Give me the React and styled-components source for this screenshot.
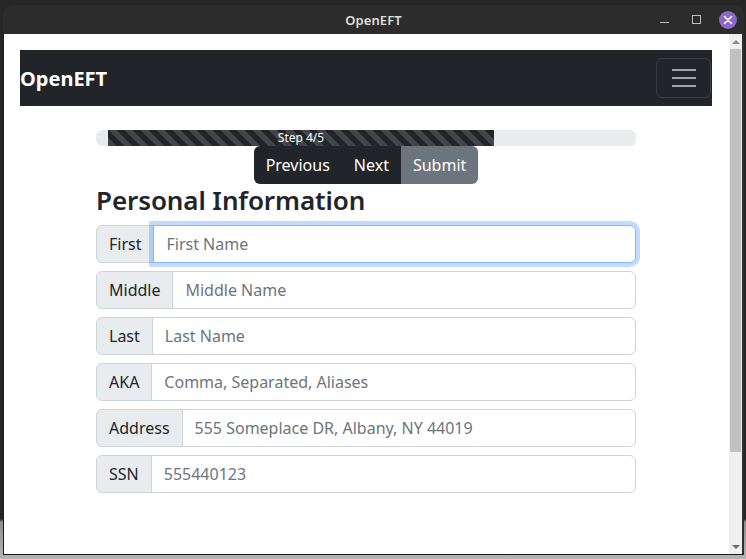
import React from "react";
import styled, { createGlobalStyle } from "styled-components";

const GlobalStyle = createGlobalStyle`
	html, body {
		margin: 0;
		padding: 0;
	}
	body {
		font-family: "Noto Sans", "DejaVu Sans", sans-serif;
		color: #212529;
	}
	* {
		box-sizing: border-box;
	}
`;

const Desktop = styled.div`
	width: 746px;
	height: 559px;
	overflow: hidden;
	padding: 5px 0 0 3px;
	background: linear-gradient(
		to bottom,
		#262626 0,
		#262626 519px,
		#8e8e8e 522px,
		#b4b4b4 559px
	);
`;

const Window = styled.div`
	width: 741px;
	display: flex;
	flex-direction: column;
`;

const TitleBar = styled.div`
	height: 29px;
	background: #2c2c2c;
	border-radius: 10px 10px 0 0;
	display: grid;
	grid-template-columns: 1fr auto 1fr;
	align-items: center;
`;

const Title = styled.div`
	grid-column: 2;
	color: #dedede;
	font-size: 13px;
	font-weight: 600;
	letter-spacing: 0.1px;
`;

const Controls = styled.div`
	grid-column: 3;
	justify-self: end;
	display: flex;
	align-items: center;
	gap: 14px;
	padding-right: 7px;
`;

const Control = styled.div`
	width: 18px;
	height: 18px;
	display: flex;
	align-items: center;
	justify-content: center;
	border-radius: 50%;
	background: ${(p) => (p.$close ? "#8a68c6" : "transparent")};
`;

const MinLine = styled.div`
	width: 9px;
	height: 1px;
	margin-top: 5px;
	background: #bdbdbd;
`;

const MaxBox = styled.div`
	width: 9px;
	height: 9px;
	border: 1px solid #bdbdbd;
`;

const Body = styled.div`
	height: 521px;
	display: flex;
	background: #fff;
	border-left: 1px solid #1b1b1b;
	border-right: 2px solid #2f2f2f;
	border-bottom: 1px solid #1b1b1b;
`;

const Page = styled.div`
	flex: 1;
	padding: 16px 17px 0 16px;
	overflow: hidden;
`;

const Scrollbar = styled.div`
	width: 13px;
	background: #efefef;
	display: flex;
	flex-direction: column;
	align-items: center;
`;

const Arrow = styled.div`
	height: 15px;
	width: 100%;
	display: flex;
	align-items: center;
	justify-content: center;
	&::after {
		content: "";
		border-left: 4px solid transparent;
		border-right: 4px solid transparent;
		${(p) =>
			p.$down
				? "border-top: 4px solid #6a6a6a;"
				: "border-bottom: 4px solid #8a8a8a;"}
	}
`;

const Thumb = styled.div`
	width: 11px;
	height: 403px;
	background: #c1c1c1;
`;

const Track = styled.div`
	flex: 1;
`;

const Navbar = styled.nav`
	height: 56px;
	background: #212529;
	display: flex;
	align-items: center;
	justify-content: space-between;
	padding-right: 1px;
`;

const Brand = styled.div`
	color: #fff;
	font-size: 20px;
	font-weight: 700;
`;

const Toggler = styled.button`
	width: 55px;
	height: 40px;
	background: transparent;
	border: 1px solid rgba(255, 255, 255, 0.1);
	border-radius: 6px;
	display: flex;
	flex-direction: column;
	align-items: center;
	justify-content: center;
	gap: 6px;
	padding: 0;
`;

const TogglerLine = styled.span`
	width: 24px;
	height: 2px;
	background: #a3a3a3;
`;

const Main = styled.main`
	width: 540px;
	margin: 24px auto 0;
`;

const Progress = styled.div`
	height: 16px;
	background: #e9ecef;
	border-radius: 6px;
	overflow: hidden;
	display: flex;
`;

const ProgressGap = styled.div`
	width: 12px;
`;

const ProgressBar = styled.div`
	background-color: #212529;
	background-image: linear-gradient(
		45deg,
		rgba(255, 255, 255, 0.15) 25%,
		transparent 25%,
		transparent 50%,
		rgba(255, 255, 255, 0.15) 50%,
		rgba(255, 255, 255, 0.15) 75%,
		transparent 75%,
		transparent
	);
	background-size: 16px 16px;
	color: #fff;
	font-size: 12px;
	display: flex;
	align-items: center;
	justify-content: center;
	line-height: 1;
`;

const ButtonRow = styled.div`
	display: flex;
	justify-content: center;
`;

const ButtonGroup = styled.div`
	display: inline-flex;
	border-radius: 6px;
	overflow: hidden;
`;

const Button = styled.button`
	height: 38px;
	padding: 0 12px;
	border: none;
	font-family: inherit;
	font-size: 16px;
	color: #fff;
	background: ${(p) => (p.$secondary ? "#6c757d" : "#212529")};
`;

const Heading = styled.h3`
	margin: 0 0 8px;
	font-size: 26px;
	font-weight: 600;
	line-height: 33px;
	letter-spacing: -0.1px;
`;

const Form = styled.form`
	display: flex;
	flex-direction: column;
	gap: 8px;
`;

const InputGroup = styled.div`
	display: flex;
	height: 38px;
`;

const Addon = styled.label`
	display: flex;
	align-items: center;
	padding: 0 12px;
	font-size: 16px;
	background: #e9ecef;
	border: 1px solid #ced4da;
	border-radius: 6px 0 0 6px;
`;

const Input = styled.input`
	flex: 1;
	min-width: 0;
	margin-left: -1px;
	padding: 0 12px;
	font-family: inherit;
	font-size: 16px;
	color: #212529;
	border: 1px solid ${(p) => (p.$focused ? "#86b7fe" : "#ced4da")};
	border-radius: 0 6px 6px 0;
	outline: none;
	position: relative;
	box-shadow: ${(p) =>
		p.$focused ? "0 0 0 4px rgba(13, 110, 253, 0.25)" : "none"};
	&::placeholder {
		color: #6c757d;
	}
`;

const fields = [
	{ label: "First", placeholder: "First Name", focused: true },
	{ label: "Middle", placeholder: "Middle Name" },
	{ label: "Last", placeholder: "Last Name" },
	{ label: "AKA", placeholder: "Comma, Separated, Aliases" },
	{ label: "Address", placeholder: "555 Someplace DR, Albany, NY 44019" },
	{ label: "SSN", placeholder: "555440123" },
];

const App = () => {
	const progress = 386;
	return (
		<Desktop>
			<GlobalStyle />
			<Window>
				<TitleBar>
					<Title>OpenEFT</Title>
					<Controls>
						<Control>
							<MinLine />
						</Control>
						<Control>
							<MaxBox />
						</Control>
						<Control $close>
							<svg width="10" height="10" viewBox="0 0 10 10">
								<path
									d="M1.5 1.5 L8.5 8.5 M8.5 1.5 L1.5 8.5"
									stroke="#fff"
									strokeWidth="1.6"
									strokeLinecap="round"
								/>
							</svg>
						</Control>
					</Controls>
				</TitleBar>
				<Body>
					<Page>
						<Navbar>
							<Brand>OpenEFT</Brand>
							<Toggler aria-label="Toggle navigation">
								<TogglerLine />
								<TogglerLine />
								<TogglerLine />
							</Toggler>
						</Navbar>
						<Main>
							<Progress>
								<ProgressGap />
								<ProgressBar style={{ width: progress }}>Step 4/5</ProgressBar>
							</Progress>
							<ButtonRow>
								<ButtonGroup>
									<Button type="button">Previous</Button>
									<Button type="button">Next</Button>
									<Button type="button" $secondary>
										Submit
									</Button>
								</ButtonGroup>
							</ButtonRow>
							<Heading>Personal Information</Heading>
							<Form>
								{fields.map((f) => (
									<InputGroup key={f.label}>
										<Addon>{f.label}</Addon>
										<Input
											placeholder={f.placeholder}
											$focused={f.focused}
											autoFocus={f.focused}
										/>
									</InputGroup>
								))}
							</Form>
						</Main>
					</Page>
					<Scrollbar>
						<Arrow />
						<Thumb />
						<Track />
						<Arrow $down />
					</Scrollbar>
				</Body>
			</Window>
		</Desktop>
	);
};

export default App;
